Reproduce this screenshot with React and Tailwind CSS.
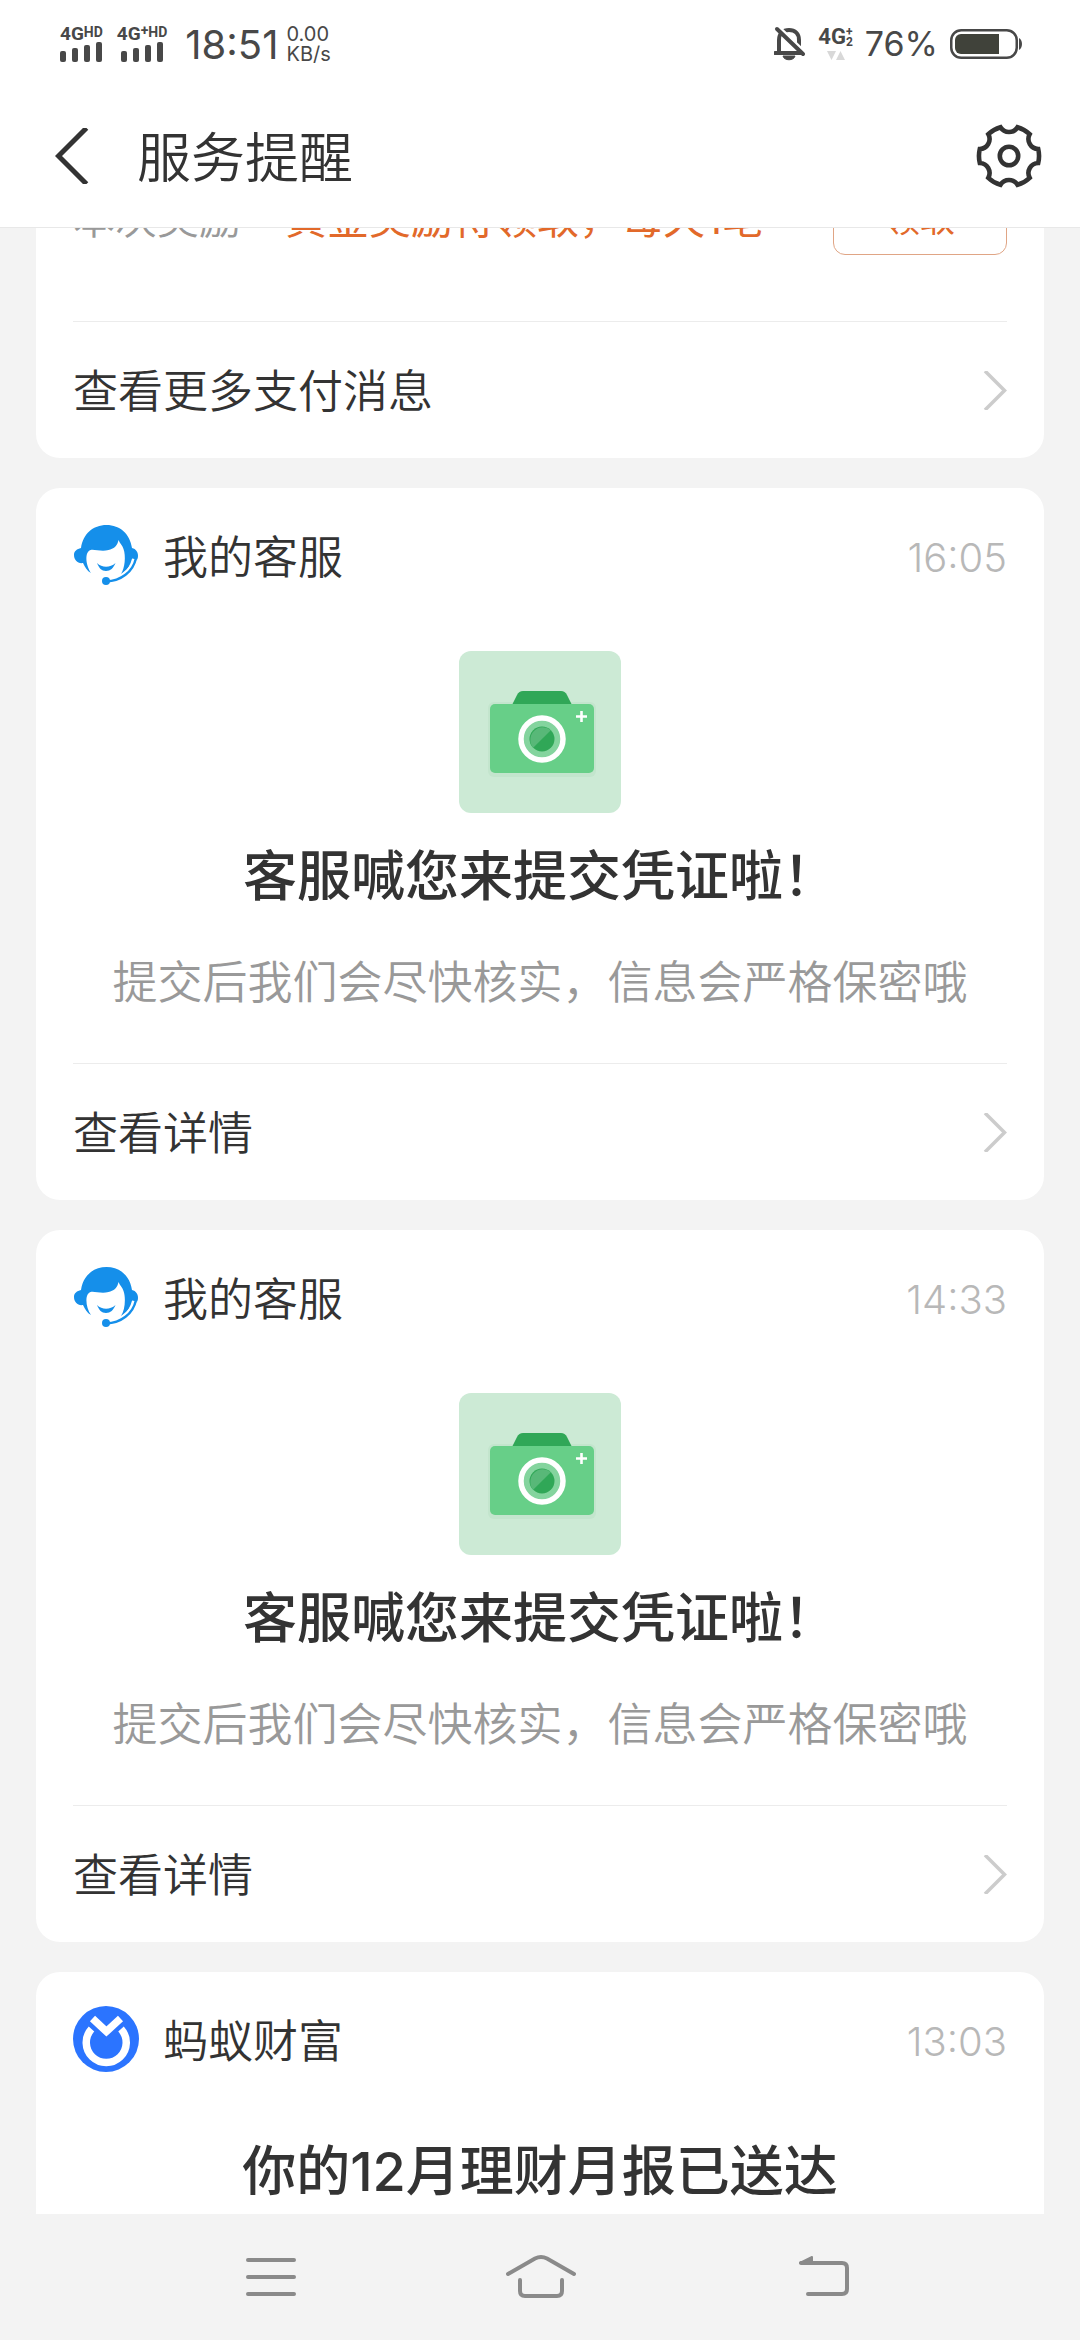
const SIGNAL_BARS = [11, 14, 17, 20];

const messages = [
  {
    id: 1,
    name: '我的客服',
    time: '16:05',
    logo: 'service',
    title: '客服喊您来提交凭证啦！',
    desc: '提交后我们会尽快核实，信息会严格保密哦',
  },
  {
    id: 2,
    name: '我的客服',
    time: '14:33',
    logo: 'service',
    title: '客服喊您来提交凭证啦！',
    desc: '提交后我们会尽快核实，信息会严格保密哦',
  },
  {
    id: 3,
    name: '蚂蚁财富',
    time: '13:03',
    logo: 'fortune',
    title: '你的12月理财月报已送达',
  },
];

const Signal = ({ label, plus }) => (
  <div className="flex flex-col items-center">
    <div className="flex items-start font-[Roboto] font-bold">
      <span className="text-[19px] leading-4">{label}</span>
      {plus && <span className="text-[14px] leading-2">+</span>}
      <span className="text-[14px] leading-3">HD</span>
    </div>
    <div className="flex h-5 items-end gap-1.5">
      {SIGNAL_BARS.map((h) => (
        <span key={h} className="w-1.5 rounded-[2px] bg-[#484848]" style={{ height: h }} />
      ))}
    </div>
  </div>
);

const StatusBar = () => (
  <div className="flex h-[87px] items-center justify-between pl-[60px] pr-[58px] text-[#484848]">
    <div className="flex items-center">
      <div className="flex gap-3.5">
        <Signal label="4G" />
        <Signal label="4G" plus />
      </div>
      <span className="ml-[18px] pt-0.5 text-[40px] leading-[48px]">18:51</span>
      <div className="ml-2 flex flex-col text-[20px] leading-[20px]">
        <span>0.00</span>
        <span>KB/s</span>
      </div>
    </div>
    <div className="flex items-center">
      <svg width="32" height="36" viewBox="0 0 32 36" fill="none" stroke="#484848" strokeWidth="4">
        <path d="M5 27V14c0-6 4-10 10-10s10 4 10 10v13" />
        <path d="M1 27h28" strokeLinecap="round" />
        <path d="M9 30c1 5 11 5 12 0z" fill="#484848" strokeWidth="1" />
        <path d="M5 1l27 26" stroke="#fff" strokeWidth="3" />
        <path d="M3 3l26 25" strokeLinecap="round" />
      </svg>
      <div className="ml-3 flex flex-col items-center gap-1">
        <div className="flex items-center font-[Roboto] font-bold">
          <span className="text-[22px] leading-5">4G</span>
          <span className="flex flex-col items-center text-[12px] leading-[10px]">
            <span>+</span>
            <span>2</span>
          </span>
        </div>
        <svg width="18" height="9" viewBox="0 0 18 9" fill="#d8d8d8">
          <path d="M0 0h9L4.500 9zM9 9h9l-4.500-9z" />
        </svg>
      </div>
      <span className="ml-3 text-[34px] leading-[40px]">76%</span>
      <svg className="ml-3" width="72" height="30" viewBox="0 0 72 30">
        <rect x="1.250" y="1.250" width="65.500" height="27.500" rx="10" fill="none" stroke="#484848" strokeWidth="2.500" />
        <path d="M11 5h38v20H11a6 6 0 0 1-6-6v-8a6 6 0 0 1 6-6z" fill="#40423a" />
        <path d="M69 9c4 2 4 10 0 12z" fill="#484848" />
      </svg>
    </div>
  </div>
);

const GearIcon = () => (
  <svg width="66" height="64" viewBox="0 0 66 64" fill="none" stroke="#333" strokeWidth="4.600">
    <path d="M41.500 3.200A30 30 0 0 1 53.700 10.200A10 10 0 0 0 62.200 25A30 30 0 0 1 62.200 39A10 10 0 0 0 53.700 53.800A30 30 0 0 1 41.500 60.800A10 10 0 0 0 24.500 60.800A30 30 0 0 1 12.300 53.800A10 10 0 0 0 3.800 39A30 30 0 0 1 3.800 25A10 10 0 0 0 12.300 10.200A30 30 0 0 1 24.500 3.200A10 10 0 0 0 41.500 3.200Z" />
    <circle cx="33" cy="32" r="9.200" />
  </svg>
);

const Header = () => (
  <header className="flex h-[141px] items-center border-b border-[#e8e8e8] pb-0.5 pl-[55px] pr-[38px]">
    <button type="button" aria-label="返回">
      <svg width="34" height="56" viewBox="0 0 34 56" fill="none" stroke="#333" strokeWidth="5">
        <path d="M31.500 0L3.500 28l28 28" />
      </svg>
    </button>
    <h1 className="ml-12 flex-1 pt-1.5 text-[54px] leading-[76px] font-[350]">服务提醒</h1>
    <button type="button" aria-label="设置">
      <GearIcon />
    </button>
  </header>
);

const ServiceLogo = () => (
  <svg width="66" height="66" viewBox="0 0 66 66" fill="#158fea">
    <path d="M8 26C10 12 20 3 33.500 3S57 12 59 26c4 1 6 4 6 8 0 4-3 7-6.500 7-2 4-6 8-10.500 11 4-6 5-18 2.500-25-1-4-3.500-5-5-9-1 6-5 9-10 10-7 2-14-1-18 0-6 2-5 15 .500 23-4-2-6-6-8-10-5 1-9-3-9-8 0-4 3-6 7-7z" />
    <path d="M24 41c5 5 13 5 18.500 0-2 5-5 8-9.500 8s-7-3-9-8z" />
    <path d="M33 59.500C47 59 58 51 61.500 37" fill="none" stroke="#fff" strokeWidth="5" />
    <path d="M33 59.500C48 59 60 50 63 36" fill="none" stroke="#158fea" strokeWidth="2.400" />
    <circle cx="33" cy="59" r="4" />
  </svg>
);

const FortuneLogo = () => (
  <svg width="66" height="66" viewBox="0 0 66 66" fill="none" stroke="#fff" strokeWidth="7.500">
    <circle cx="33" cy="33" r="33" fill="#2b74ff" stroke="none" />
    <path d="M18.500 23A20 20 0 1 0 48 23" />
    <path d="M19.500 12.500L33.400 25.500L47.500 12.500" />
  </svg>
);

const CameraPicture = () => (
  <svg className="rounded-xl bg-[#ccead5]" width="162" height="162" viewBox="0 0 162 162">
    <rect x="29" y="51" width="108" height="75" rx="6" fill="#c3e5cd" />
    <path d="M53 54l5-10q2-4 6-4h38q4 0 6 4l5 10z" fill="#30a757" />
    <rect x="31" y="53" width="104" height="69" rx="5" fill="#67cf88" />
    <circle cx="83" cy="88" r="21" fill="#84d49e" stroke="#fff" strokeWidth="5.500" />
    <circle cx="83" cy="88" r="12.500" fill="#30a757" />
    <path d="M74.200 96.800A12.500 12.500 0 0 1 91.800 79.200z" fill="#58b878" />
    <path d="M122.500 60v11M117 65.500h11" stroke="#fff" strokeWidth="2.600" />
  </svg>
);

const LinkRow = ({ children }) => (
  <a
    href="#"
    className="flex h-[137px] items-center justify-between border-t border-[#ececec] text-[45px] leading-[64px] font-[350]"
  >
    <span className="pt-1">{children}</span>
    <svg width="24" height="39" viewBox="0 0 24 39" fill="none" stroke="#ccc" strokeWidth="3.500">
      <path d="M2 0l19.500 19.500L2 39" />
    </svg>
  </a>
);

const RewardCard = () => (
  <section className="-mt-[45px] shrink-0 rounded-b-3xl bg-white px-[37px]">
    <div className="mb-[66px] flex h-[72px] items-center text-[42px] leading-[60px]">
      <span className="font-[350] text-[#999]">本次奖励</span>
      <span className="ml-11 flex-1 text-[#e2692a]">黄金奖励待领取，每天1笔</span>
      <button
        type="button"
        className="h-[72px] w-[174px] rounded-xl border border-[#e0a585] text-[35px] leading-[50px] text-[#e2692a]"
      >
        领取
      </button>
    </div>
    <LinkRow>查看更多支付消息</LinkRow>
  </section>
);

const MessageCard = ({ name, time, logo, title, desc }) => (
  <section className="shrink-0 rounded-3xl bg-white px-[37px]">
    <div className="flex h-[134px] items-center">
      {logo === 'service' ? <ServiceLogo /> : <FortuneLogo />}
      <h2 className="ml-6 flex-1 pt-1.5 text-[45px] leading-[64px] font-[350]">{name}</h2>
      <time className="pt-1.5 text-[40px] leading-[64px] font-light text-[#b8b8b8]">{time}</time>
    </div>
    {desc ? (
      <>
        <div className="flex flex-col items-center pt-[29px] pb-12">
          <CameraPicture />
          <h3 className="mt-[26px] text-[54px] leading-[76px] font-medium">{title}</h3>
          <p className="mt-9 text-[45px] leading-[64px] font-[350] text-[#999]">{desc}</p>
        </div>
        <LinkRow>查看详情</LinkRow>
      </>
    ) : (
      <h3 className="pt-7 pb-12 text-center text-[54px] leading-[76px] font-medium">{title}</h3>
    )}
  </section>
);

const NavBar = () => (
  <nav className="flex h-[126px] shrink-0 items-center justify-between px-[231px]">
    <button type="button" aria-label="最近任务">
      <svg width="80" height="46" viewBox="0 0 80 46" stroke="#8a8a8a" strokeWidth="4" strokeLinecap="round">
        <path d="M17 6h46M17 23h46M17 40h46" />
      </svg>
    </button>
    <button type="button" aria-label="主页">
      <svg width="80" height="46" viewBox="0 0 80 46" fill="none" stroke="#8a8a8a" strokeWidth="4" strokeLinecap="round">
        <path d="M8 20L35 4.500q6-3 12 0L74 20" />
        <path d="M20 26v11q0 5 5 5h32q5 0 5-5V26" />
      </svg>
    </button>
    <button type="button" aria-label="返回上一页">
      <svg width="80" height="46" viewBox="0 0 80 46" fill="none" stroke="#8a8a8a" strokeWidth="4" strokeLinecap="round">
        <path d="M32 9h41q5 0 5 5v21q0 5-5 5H39" />
        <path d="M31 9l12-6v6z" fill="#8a8a8a" strokeWidth="2" strokeLinejoin="round" />
      </svg>
    </button>
  </nav>
);

const App = () => (
  <div className="flex h-screen flex-col bg-[#f3f3f3] font-[Inter,'Noto_Sans_CJK_SC',sans-serif] text-[#333]">
    <div className="relative shrink-0 bg-white">
      <StatusBar />
      <Header />
    </div>
    <main className="flex flex-1 flex-col gap-[30px] overflow-hidden px-9">
      <RewardCard />
      {messages.map((m) => (
        <MessageCard key={m.id} {...m} />
      ))}
    </main>
    <NavBar />
  </div>
);

export default App;
